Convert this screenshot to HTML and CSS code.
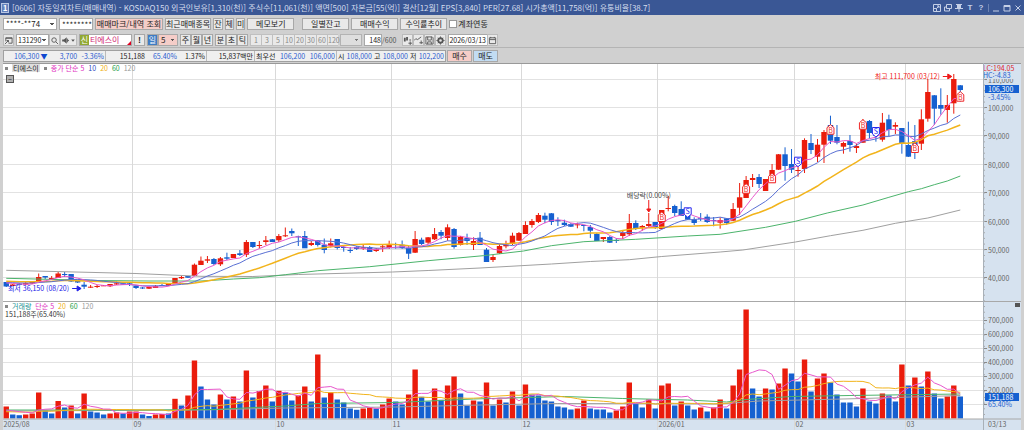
FILE: index.html
```html
<!DOCTYPE html>
<html lang="ko">
<head>
    <meta charset="UTF-8">
    <meta name="viewport" content="width=device-width, initial-scale=1.0">
    <title>[0606] 자동일지차트(매매내역)</title>
    <link rel="stylesheet" href="styles.css">
</head>
<body>
    <header class="titlebar">
        <span class="win-no">1</span>
        <h1>[0606] 자동일지차트(매매내역) - KOSDAQ150 외국인보유[1,310(천)] 주식수[11,061(천)] 액면[500] 자본금[55(억)] 결산[12월] EPS[3,840] PER[27.68] 시가총액[11,758(억)] 유통비율[38.7]</h1>
        <div class="win-buttons">
            <button aria-label="축소"><svg viewBox="0 0 8 8"><path d="M.5 .5h7v7h-7zM.5 4.5h3v3M3.5 4.5L6 2M4 2h2v2"/></svg></button>
            <button aria-label="복제"><svg viewBox="0 0 8 8"><path d="M2.500 .5h5v4h-5zM2 3H.5v4h5V5"/></svg></button>
            <button aria-label="고정"><svg viewBox="0 0 8 8"><path class="solid" d="M1 0h6v1H6v3h2v1H0V4h2V1H1zM3.500 5h1v3h-1z"/></svg></button>
            <button class="glyph">T</button>
            <button class="glyph">?</button>
            <i></i>
            <button aria-label="최소화"><svg viewBox="0 0 8 8"><path d="M1 7h6"/></svg></button>
            <button aria-label="최대화"><svg viewBox="0 0 8 8"><path d="M1 1.500h6v5.500H1zM1 2.500h6"/></svg></button>
            <button aria-label="닫기"><svg viewBox="0 0 8 8"><path d="M1.500 1.500l5 5M6.500 1.500l-5 5"/></svg></button>
        </div>
    </header>

    <div class="toolbar">
        <select class="account" aria-label="계좌번호"><option>****-**74</option></select>
        <input class="password" type="text" value="********" aria-label="비밀번호">
        <button class="btn pink trades">매매마크/내역 조회</button>
        <button class="btn">최근매매종목</button>
        <button class="btn">잔</button>
        <button class="btn">체</button>
        <button class="btn">미</button>
        <button class="btn wide">메모보기</button>
        <button class="btn wide apart">일별잔고</button>
        <button class="btn wide">매매수익</button>
        <button class="btn wide">수익률추이</button>
        <label class="check"><input type="checkbox">계좌연동</label>
    </div>

    <div class="toolbar">
        <button class="icon" aria-label="화면 열기"><svg viewBox="0 0 10 10"><path d="M2 6V2h7v6H5M2 2.500h7M1 9l4-4M3 5h2v2"/></svg></button>
        <div class="group">
            <select class="code" aria-label="종목코드"><option>131290</option></select>
            <button class="icon" aria-label="종목검색"><svg viewBox="0 0 10 10"><circle cx="4.500" cy="4.500" r="2.500"/><path d="M6.500 6.500L9 9"/></svg></button>
            <button class="icon sound" aria-label="소리"><svg viewBox="0 0 16 10"><path class="solid" d="M1 4h2l3-2.500v7L3 6H1z"/><path d="M7 3v4M8.500 5H7"/><path class="solid" d="M11 4h4l-2 2.500z"/></svg></button>
        </div>
        <div class="stock"><b>신</b><span>티에스이</span></div>
        <button class="btn mark">!</button>
        <div class="group period">
            <button class="on">일</button>
            <select class="pink" aria-label="주기"><option>5</option></select>
        </div>
        <div class="group cells">
            <button>주</button><button>월</button><button>년</button>
        </div>
        <div class="group cells">
            <button>분</button><button>초</button><button>틱</button>
        </div>
        <div class="group cells minutes">
            <button>1</button><button>3</button><button>5</button><button>10</button><button>20</button><button>30</button><button>60</button><button>120</button>
        </div>
        <select class="blank" aria-label="분 선택" disabled><option></option></select>
        <label class="count"><input type="text" value="148">/600</label>
        <div class="group icons">
            <button class="icon" aria-label="차트 추가"><svg viewBox="0 0 10 10"><path class="solid" d="M1 2h2v4H1zM3.500 1h2v4h-2zM7 4h2v1H7z"/><path d="M8 6v4M6 8h4"/></svg></button>
            <button class="icon" aria-label="지표 추가"><svg viewBox="0 0 10 10"><path d="M0 5l2-2 2 1 4-3M8 5v4M6 7.500h4"/></svg></button>
            <button class="icon" aria-label="저장"><svg viewBox="0 0 10 10"><path d="M1 1h7l1 1v7H1zM3 1v3.500h4V1M3 9V6.500h4V9"/></svg></button>
            <button class="icon" aria-label="설정"><svg viewBox="0 0 10 10"><circle class="gear" cx="5" cy="5" r="2.500" stroke-width="2"/><path d="M5 .5v1.500M5 8v1.500M.5 5H2M8 5h1.500M2 2l1 1M7 7l1 1M2 8l1-1M7 3l1-1"/></svg></button>
        </div>
        <div class="group date">
            <input type="text" value="2026/03/13" aria-label="기준일">
            <button class="icon" aria-label="달력"><svg viewBox="0 0 10 10"><path d="M1.500 2h7v6.500h-7zM1.500 4h7M3 1v1.500M7 1v1.500"/></svg></button>
        </div>
    </div>

    <div class="toolbar quotes">
        <div class="quote">
            <span class="cell c1"><em>106,300</em><em class="down">▼</em><em>3,700</em><em>-3.36%</em></span>
            <span class="cell c2"><span>151,188</span><em>65.40%</em><span>1.37%</span></span>
            <span class="cell c3">15,837백만</span>
            <span class="cell c4">최우선<em>106,200</em><em>106,000</em></span>
            <span class="cell c5">시<em>108,000</em>고<em>108,000</em>저<em>102,200</em></span>
        </div>
        <button class="btn order pink">매수</button>
        <button class="btn order blue">매도</button>
    </div>

    <main class="chart">
        <svg id="chart" role="img" aria-label="티에스이 일봉 차트"></svg>
        <div class="legend price-legend">
            <i></i><span class="name">티에스이</span><i></i><span class="ma5">종가 단순 5</span><span class="ma10">10</span><span class="ma20">20</span><span class="ma60">60</span><span class="ma120">120</span>
        </div>
        <button class="fold" aria-label="접기">−</button>
        <div class="legend volume-legend">
            <i></i><span class="vol">거래량</span><span class="ma5">단순 5</span><span class="ma20">20</span><span class="ma60">60</span><span class="ma120">120</span>
        </div>
    </main>

    <script src="chart.js"></script>
</body>
</html>
```
FILE: styles.css
```css
* {
    box-sizing: border-box;
}
body {
    margin: 0;
    min-height: 100vh;
    display: flex;
    flex-direction: column;
    background: #d0d0d0;
    color: #222;
    font-family: "Noto Sans CJK KR", sans-serif;
    font-size: 8px;
    line-height: 10px;
}
button, input, select {
    font: inherit;
    color: inherit;
    margin: 0;
    padding: 0;
    border: 1px solid #a8a8a8;
    border-radius: 0;
    background: #e9e9e9;
    white-space: nowrap;
}
svg {
    display: block;
    fill: none;
    stroke: currentColor;
}
em {
    font-style: normal;
    color: #2a5cd0;
}

/* title bar */
.titlebar {
    display: flex;
    align-items: center;
    gap: 3px;
    height: 15px;
    padding: 0 2px 0 1px;
    background: #3a5795;
    color: #d5ddee;
}
.titlebar h1 {
    flex: 1;
    margin: 0;
    font-size: 8px;
    font-weight: normal;
    white-space: nowrap;
    overflow: hidden;
}
.win-no {
    width: 8px;
    height: 10px;
    border: 1px solid #b8c6e4;
    background: #6482bd;
    color: #fff;
    font-weight: bold;
    line-height: 8px;
    text-align: center;
}
.win-buttons {
    display: flex;
    align-items: center;
    gap: 3px;
}
.win-buttons button {
    width: 8px;
    height: 10px;
    border: 0;
    background: none;
    color: #c4cfe6;
}
.win-buttons svg {
    width: 8px;
    height: 8px;
}
.win-buttons i {
    width: 1px;
    height: 8px;
    background: #6c82b2;
}
.win-buttons .glyph {
    font-family: "Liberation Sans", sans-serif;
    font-weight: bold;
}
.solid {
    fill: currentColor;
    stroke: none;
}

/* toolbars */
.toolbar {
    display: flex;
    align-items: center;
    gap: 2px;
    height: 16px;
    padding: 2px 3px 0;
}
.toolbar select, .toolbar input[type="text"] {
    height: 12px;
    background-color: #fff;
}
.toolbar select {
    appearance: none;
    padding: 0 2px;
    background-image: linear-gradient(45deg, transparent 50%, #555 50%), linear-gradient(-45deg, transparent 50%, #555 50%);
    background-size: 2px 2px;
    background-position: right 4px center, right 2px center;
    background-repeat: no-repeat;
}
.account {
    width: 54px;
}
.password {
    width: 34px;
    padding-left: 2px;
}
.btn {
    height: 12px;
    line-height: 10px;
}
.btn.trades {
    width: 68px;
}
.btn.wide {
    width: 47px;
}
.btn.apart {
    margin-left: 6px;
}
.btn.pink, .toolbar select.pink {
    background-color: #f5cdc8;
}
.btn.blue {
    background-color: #c2dcf2;
}
.btn.mark {
    width: 11px;
    font-weight: bold;
}
.check {
    display: flex;
    align-items: center;
    gap: 1px;
}
.check input {
    appearance: none;
    width: 8px;
    height: 8px;
    border-color: #999;
    background: #fff;
}
.group {
    display: flex;
}
.icon {
    width: 11px;
    height: 12px;
    color: #555;
    border-color: #bbb;
}
.icon svg {
    width: 9px;
    height: 9px;
    stroke-width: 1;
}
.sound {
    width: 17px;
}
.sound svg {
    width: 15px;
}
.toolbar .code {
    width: 33px;
    padding: 0 1px;
    font-size: 7px;
}
.stock {
    position: relative;
    display: flex;
    width: 53px;
    height: 12px;
    border: 1px solid #a8a8a8;
    background: #fff;
    color: #d01a70;
}
.stock b {
    width: 9px;
    margin-right: 1px;
    background: #92a832;
    color: #fff;
    font-weight: normal;
    text-align: center;
}
.stock::after {
    content: "";
    position: absolute;
    right: 0;
    bottom: 0;
    border: 2px solid #e00020;
    border-top-color: transparent;
    border-left-color: transparent;
}
.period button {
    width: 11px;
    height: 12px;
    background: #3f7cc4;
    color: #fff;
}
.period select {
    width: 20px;
}
.cells button {
    width: 11px;
    height: 12px;
    text-align: center;
}
.minutes button {
    border-width: 1px 0 1px 1px;
    border-color: #c0c0c0;
    color: #888;
    font-size: 7px;
}
.toolbar .blank {
    width: 22px;
    background-color: #e4e4e4;
}
.count {
    display: flex;
    align-items: center;
    color: #555;
    font-size: 7px;
}
.count input {
    width: 18px;
    color: #222;
    text-align: right;
}
.icons {
    margin-left: 4px;
}
.toolbar .date input {
    width: 39px;
    border-right: 0;
    font-size: 7px;
}

/* quote strip */
.quotes {
    height: 16px;
    border-top: 1px solid #b4b4b4;
    padding-top: 1px;
    gap: 1px;
}
.quote {
    display: flex;
    height: 12px;
    border: 1px solid #a0a0a0;
    background: #efefef;
    font-size: 7px;
    white-space: nowrap;
}
.cell {
    display: flex;
    justify-content: flex-end;
    padding: 0 1px;
    border-right: 1px solid #bbb;
}
.cell:last-child {
    border-right: 0;
}
.c1 {
    width: 102px;
    justify-content: space-between;
    padding-left: 10px;
}
.down {
    margin: 0 8px 0 -3px;
    color: #1048d0;
}
.c2 {
    width: 101px;
    gap: 8px;
}
.c3 {
    width: 48px;
}
.c4 {
    width: 82px;
    justify-content: space-between;
}
.c5 {
    width: 108px;
    justify-content: space-between;
}
.order {
    width: 25px;
}

/* chart */
.chart {
    position: relative;
    flex: 1;
    margin: 0 3px;
    background: #fff;
    font-size: 7px;
}
#chart {
    width: 100%;
    height: 367px;
    stroke: none;
}
#chart text {
    fill: #555;
}
.legend {
    position: absolute;
    left: 2px;
    display: flex;
    align-items: center;
    gap: 4px;
    line-height: 8px;
    white-space: nowrap;
}
.legend i {
    width: 3px;
    height: 3px;
    background: #888;
}
.price-legend {
    top: 1px;
}
.volume-legend {
    top: 239px;
}
.name {
    padding: 0 1px;
    background: #dedede;
}
.fold {
    position: absolute;
    left: 3px;
    top: 12px;
    width: 8px;
    height: 8px;
    background: #b0b0b0;
    border-color: #555;
    line-height: 6px;
}
.ma5 { color: #e030c0; }
.ma10 { color: #2a48c0; }
.ma20 { color: #f0b010; }
.ma60 { color: #1ca048; }
.ma120 { color: #999; }
.vol { color: #149090; }
```
FILE: chart.js
```js
const UP = '#ea1c0c', DOWN = '#1560d0';
const AXIS_W = 38, SLOTS = 151, TOP = 63, BASE = 418.5;
const MA = { 5: '#e858cc', 10: '#5a70d4', 20: '#f2b41c', 60: '#4cb46c', 120: '#a0a0a0' };

// direction, high, body top, body bottom, low
const candles = `d282,282,286.5,287 u284,284.5,286,286 d283,283.5,285,285 u282,283,284.5,285 u281,281.5,283.5,284 u273.5,277,281.7,282
d276,276,277.5,279 u276,278,279.7,280 u272,273.5,278,278 d272,274,275,277 d274,274,281.5,282 d280,281,282.5,283 d282,284.7,286.7,289
u285,286.7,287.7,288 u285,286,287,288 u285,285.3,286,286 u284,284,286.3,287 u281.5,283.3,284.5,285 d283,283.3,284.7,285 d282,283.3,285,286
d285,285.7,288,289 d287,287.5,288.5,289 u286,287,288.7,289 u285,286,288,288 d284,285,286,286 u283,283.7,285.7,286 u278,278,284,284
u276,277,278.3,279 d276,276,277.7,278 u263.5,264.7,276,276 u256.5,260.7,265,265 u256,259.3,260.7,263 d258,259,264,265 u257,258.3,264.3,266
d252.7,257.3,258.7,260 u254,254,258,258 d250,253.3,255,256 u240,242,254.7,257 d242,242,247,248 u241,245,246,248.5 u236,240.3,242,245
d239,239.3,242,242 u234,236,240.3,242 u227.5,235.3,236,237 d228.5,231,233.3,236 d235.7,236.3,237,246 d231,236,248.3,248 u241,243,245,246
d240,241,245,246.5 d238.5,244.7,250,253.3 u238.5,243.3,246,247.5 d239,239,248,249.5 d246,247,247.7,251.7 d247,250,250.7,253 d246,247,249,250
u244,247.3,248.7,250 d246,247,252,252 u248,248.7,251,252 u244.5,246.3,247,252 u240.7,244.3,248,249 d242.7,244,244.7,248.7 d240.5,244.7,248,249
d246,247.7,253.7,259 u231,239,252.7,253 d237.7,239.7,244,245 u237,237.3,242.7,244 u228,234,239.3,240 d230,232,235.7,239.3 u224.3,227.3,238,240.7
d228,229,247,248.7 u236,237,245,245.5 d233.7,238,241,245 u237.3,241,245,250 d232,237.7,245,245 d248,249.7,262,262 u255,257,260,262
u244,246,253.3,254 u240.7,244.7,246.3,248.3 u232.7,235.7,244,245 u232,233,240.7,241 u221.3,225,234,234 u219,221,225,227.7 u213,215,222,223
d212.7,215.7,219.7,223.3 d213,213.3,222,225 d217.3,220,221.3,226 d219.7,222.7,225,226 d223,224,226.7,227 u222.7,224.3,225.3,228.3
d225,225,226,231.3 d225,227,230.7,238 d233,234,241,241 u237,237,239,242 d236,237,242.7,243 d238,240,240.7,243 u230,233,236,239
u214,223,234.3,236 d220.3,223,229,230 u225,226,227.7,230.7 u213,224,226,227 d222,222,228,229 u210,210,229,229 u196,208,209,211.3
d204.7,206,213,216 d201.3,209,216,216 d210,210,219.7,220 d217.3,219.3,223,225 d213,218.3,219,221 d214.3,216.7,222,223 d217,220,221,226.3
u217.3,220,222.7,228.7 d218,218.3,223,224.7 u203,209,220.7,221 u183,197.3,207.7,215 u176,180,198,198 u174,178,180,187 d174,177,184,188
u179,179,191,191 u164,170,183,183 u154,154.3,169.7,170 d147.3,154.3,166,180.7 d149,164,169.7,173 u166.7,170,171,176.7 u138.3,140,169,173
d134,143,150,154 u139,144.7,156.7,162 u130,132,144.7,163 d115.7,125,140.7,144 d125,137,142.7,144.3 u141.7,143,146.7,153.7 d135,141,145,151.7
u143.7,146,148,153 u119,126,142.7,143 d120,121,133,138.7 d130,130,136,141.7 u113,122.7,139.7,141.7 d114.7,119.3,130,136 u122.3,125,126.7,134
d128,128,143.7,153.7 d121.7,145,156.7,157 d125,141,146.7,159 u109.3,119.3,143.7,150 u79,92,118.7,121.7 d95,95.3,108.7,125
d88.3,105,108.7,114.7 u95,105,110,122.7 u74,79,103.3,113.7 d85,85.3,90,101.7`.split(/\s+/).map(s => {
    const [high, top, bottom, low] = s.slice(1).split(',').map(Number);
    return { up: s[0] === 'u', high, top, bottom, low };
});

// direction + bar height
const volumes = `u12 d4 d3.3 u4 u5 u26 d8 d5 u17.5 d11 u13 d5 u25 d7 d6 d4 u5 u6 d5 u7 u7 d4 d2.5 u4 u4.5 d5 u19.7 d13 u23 u58 d32 d19 d14 u24 d19 u22 d17 u48 d21
u27.5 u33 d17 u27.7 d26 d18 u23 u32 d17 u64 d21 u26 d19 d16 d10 d8.7 u10 u11 d10 u14 u20 d17 d14 u24 u49 d21.7 d17 u30 d18.7 u33 u42 d25 d13
u18 d17 u36 d13 u19 d16 u27 d13 u34 d24 d23 d18 d17 d12 d11 d9 u10 u18 d10 d9 d9 d6 u8 u12 u36 d15 d11 u19 d10 u33 u35 d13 u17 d13 d9 u11 d7
u11 u19 d10 u33 u49 u109 d30 d22 u30 d29 u35 u50 d45 d37 u59 d27 u40 u45 d36 d24 d16 d16 d12 u30 d17 d15 u25 d23 d17 u54 d33 u41 d32 u47 d25 d20 u22 u33 d22`
    .split(/\s+/).map(s => ({ up: s[0] === 'u', h: +s.slice(1) }));

// long averages as [slot, y]
const price60 = [[0,278.3],[14,280.5],[22,281],[30,281],[35,279],[39,277.7],[43,274.7],[48,270.7],[56,266.7],[65,260.7],[73.5,255.7],[79.7,251],[84,245.7],[89,241.7],[97,239.3],[105,236],[110,234.3],[117,227.3],[121.6,221.3],[126.5,213],[132,205],[136,197.3],[139,191.7],[141,188.7],[143,184.7],[145,181],[147,176]];
const price120 = [[0,270.3],[20,273.5],[30,276.3],[38,276.5],[45,274.5],[59.5,272],[65,270.5],[73,268],[84,264],[90,261.5],[96,259.7],[101,256.5],[110,252],[113.5,250],[121.6,242],[127,235.7],[132,230.3],[137,223.3],[142,218],[147,210]];
const volume60 = [[0,410],[22,410],[32,409.5],[43,406],[48,403.5],[60,402.5],[72,399],[86,396.5],[95,398.5],[105,400],[111,402],[114,399.5],[121,396.5],[130,395.5],[147,394]];
const volume120 = [[0,411],[30,410],[43,408],[60,407],[73,405],[85,403.5],[100,403.7],[110,404],[116,401],[132,398.5],[147,395.5]];

const svg = document.getElementById('chart');

function average(values, n, before) {
    const all = Array(n).fill(before).concat(values);
    return values.map((v, i) => [i, all.slice(i + 1, i + 1 + n).reduce((a, b) => a + b, 0) / n]);
}

function draw() {
    const w = svg.clientWidth;
    const plot = w - AXIS_W;
    const x = i => (i + 0.5) * plot / SLOTS;
    const priceY = p => 392 - p * 2.84;
    const volY = v => BASE - v * 0.1413;
    let out = '';

    const rect = (x, y, w, h, fill) => out += `<rect x="${x}" y="${y}" width="${w}" height="${h}" fill="${fill}"/>`;
    const line = (x1, y1, x2, y2, c) => out += `<path d="M${x1} ${y1}L${x2} ${y2}" stroke="${c}" fill="none"/>`;
    const text = (x, y, s, c = '#666', extra = '') => out += `<text x="${x}" y="${y}" style="fill:${c}" ${extra}>${s}</text>`;
    const curve = (points, c, width = 1) => out += `<polyline fill="none" stroke="${c}" stroke-width="${width}" points="${points.map(p => x(p[0]) + ',' + p[1]).join(' ')}"/>`;

    rect(plot, TOP, AXIS_W, 367, '#d6e2ef');
    rect(0, 419, w, 11, '#d6e2ef');

    // grid and axis labels
    for (let p = 40; p <= 110; p += 10) {
        const y = Math.round(priceY(p)) - 0.5;
        line(0, y, plot, y, '#e2e2e2');
        line(plot, y, plot + 4, y, '#888');
        text(plot + 5, y + 3, p + ',000');
    }
    for (let v = 100; v <= 700; v += 100) {
        const y = Math.round(volY(v)) + 0.5;
        line(0, y, plot, y, '#e2e2e2');
        line(plot, y, plot + 4, y, '#888');
        if (v > 100) text(plot + 5, y + 2, v + ',000');
    }
    for (let y = 68; y < 415; y += 5.68) line(plot, y, plot + 2, y, '#aaa');
    [[-0.5, '2025/08'], [19.6, '09'], [41.5, '10'], [59.5, '11'], [79.5, '12'], [100.5, '2026/01'], [121.6, '02'], [138.7, '03']].forEach(([i, s]) => {
        const mx = Math.round(x(i)) - 0.5;
        if (i > 0) line(mx, TOP, mx, 430, '#d9d9d9');
        text(mx + 1, 427, s);
    });
    text(plot + 5, 427, '03/13');

    // price
    candles.forEach((c, i) => {
        const color = c.up ? UP : DOWN;
        line(x(i), c.high, x(i), c.low, color);
        rect(x(i) - 2.7, c.top, 5.4, Math.max(1, c.bottom - c.top), color);
    });
    const closes = candles.map(c => c.up ? c.top : c.bottom);
    curve(price120, MA[120]);
    curve(price60, MA[60]);
    curve(average(closes, 20, 281), MA[20], 1.5);
    curve(average(closes, 10, 282), MA[10]);
    curve(average(closes, 5, 282), MA[5]);

    // volume
    volumes.forEach((v, i) => rect(x(i) - 2.7, BASE - v.h, 5.4, v.h, v.up ? UP : DOWN));
    const heights = volumes.map(v => BASE - v.h);
    curve(volume120, MA[120]);
    curve(volume60, MA[60]);
    curve(average(heights, 20, 412), MA[20]);
    curve(average(heights, 5, 411), MA[5]);

    // trade marks
    [[101,217],[114,188.7],[118,178.3],[127,129.7],[132,124.7],[140,148],[147,96.7]].forEach(([i, y]) => {
        out += `<path d="M${x(i)} ${y - 5}l3.5 3v6.5h-7v-6.5z" fill="#fff" stroke="#f02828"/>`;
        text(x(i), y + 3, 'B', '#f02828', 'text-anchor="middle"');
    });
    [[105,212.3],[122,161.7],[134,132]].forEach(([i, y]) => {
        out += `<path d="M${x(i)} ${y + 5}l3.5-3v-6.5h-7v6.5z" fill="#fff" stroke="#2828f0"/>`;
        text(x(i), y + 2, 'S', '#2828f0', 'text-anchor="middle"');
    });

    // notes
    text(x(146) - 14, 79, '최고 111,700 (03/12)', '#f01818', 'text-anchor="end"');
    out += `<path d="M${x(146) - 11} 76.5h5M${x(146) - 6} 74v5l4-2.5z" fill="#f01818" stroke="#f01818"/>`;
    text(x(12) - 15, 291, '최저 36,150 (08/20)', '#2020e8', 'text-anchor="end"');
    out += `<path d="M${x(12) - 12} 288.5h5M${x(12) - 7} 286v5l4-2.5z" fill="#2020e8" stroke="#2020e8"/>`;
    text(x(99), 198, '배당락(0.00%)', '#444', 'text-anchor="middle"');
    out += `<path d="M${x(99)} 200v9M${x(99) - 2} 209h4l-2 3z" fill="#f01818" stroke="#f01818"/>`;
    text(2, 317, '151,188주(65.40%)', '#333');

    // current values on the axis
    rect(plot, 64, AXIS_W - 1, 15, '#d6e2ef');
    text(plot, 71, 'LC:194.05', '#e02828');
    text(plot, 78, 'HC:-4.83', '#2460d0');
    rect(plot + 2, 85, AXIS_W - 4, 8, '#1560d0');
    text(plot + 5, 92, '106,300', '#fff');
    text(plot + 5, 100, '-3.45%', '#2460d0');
    rect(plot + 2, 393, AXIS_W - 4, 8, '#1560d0');
    text(plot + 5, 400, '151,188', '#fff');
    text(plot + 5, 407, '65.40%', '#2460d0');

    // frame
    line(0, 63.5, w, 63.5, '#999');
    line(0, 301.5, w, 301.5, '#a8a8a8');
    line(0, 419, w, 419, '#a8a8a8');
    line(plot + 0.5, TOP, plot + 0.5, 430, '#a8b0b8');
    rect(w - 6, 303, 5, 4, '#555');

    svg.innerHTML = `<g transform="translate(0 ${-TOP})">${out}</g>`;
}

draw();
window.addEventListener('resize', draw);
```
